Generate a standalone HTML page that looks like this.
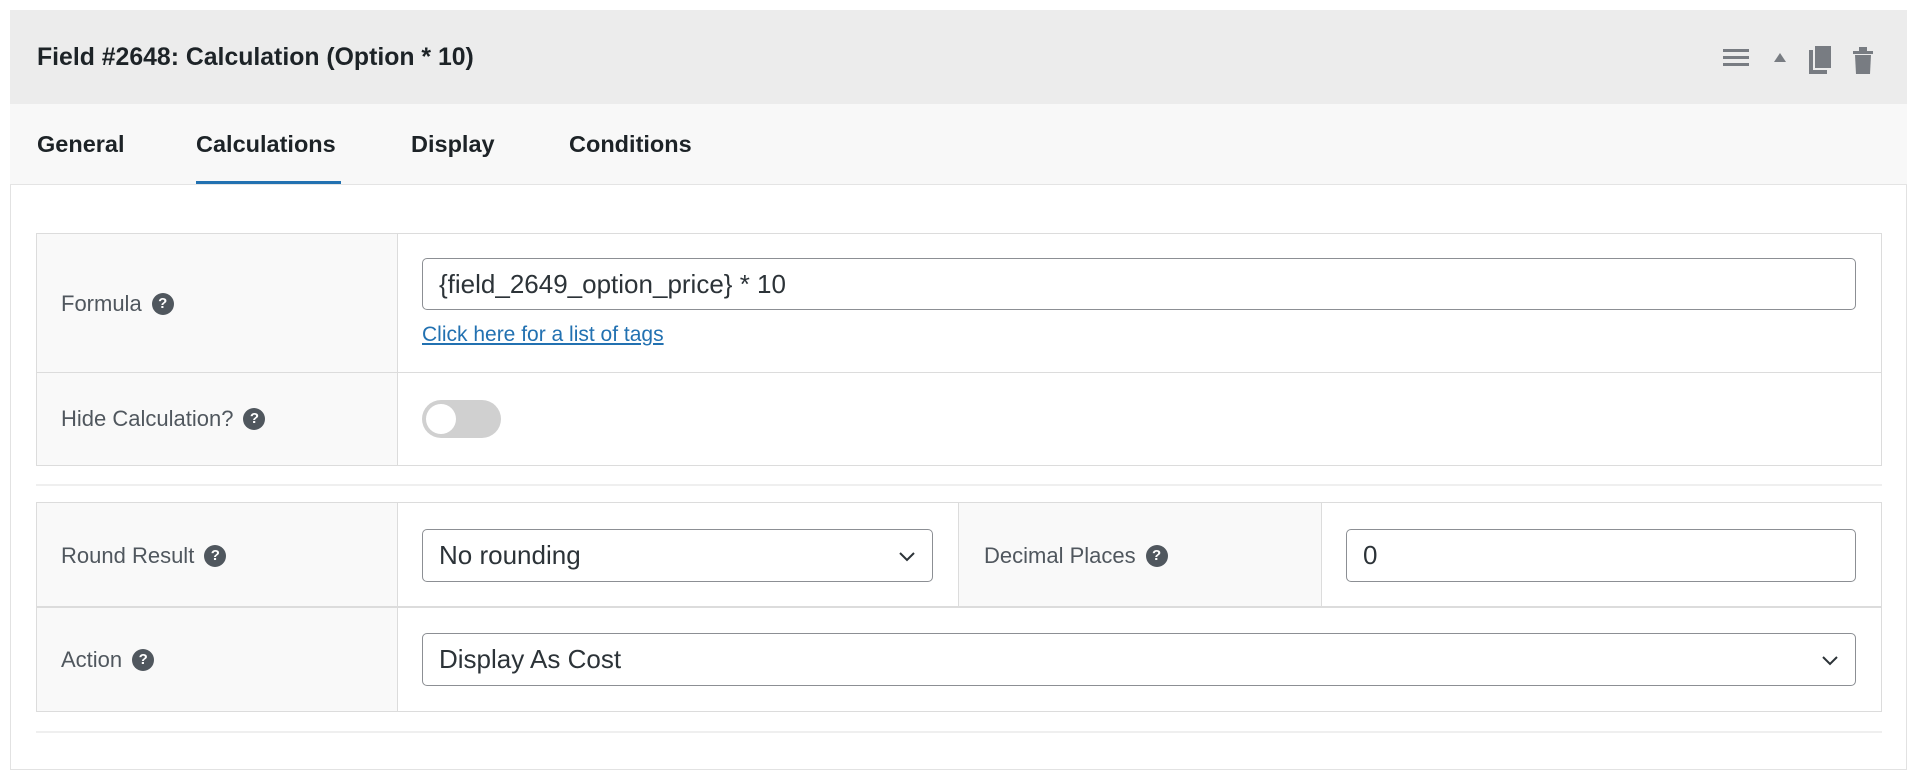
<!DOCTYPE html>
<html><head><meta charset="utf-8"><style>
*{box-sizing:border-box;margin:0;padding:0}
body{width:1920px;height:748px;background:#fff;font-family:"Liberation Sans",sans-serif;position:relative;overflow:hidden;color:#1d2327}
.abs{position:absolute}
.panel{left:10px;top:10px;width:1897px;height:760px;border:1px solid #e2e2e2;background:#fff}
.hdr{left:10px;top:10px;width:1897px;height:94px;background:#ececec}
.tabs{left:10px;top:104px;width:1897px;height:81px;background:#f8f8f8;border-bottom:1px solid #e4e4e4}
.t{position:absolute;top:130px;font-size:23.5px;line-height:28px;font-weight:bold;color:#1d2327}
.cell{position:absolute;background:#f9f9f9;border:1px solid #dcdcdc}
.lbl{position:absolute;font-size:22px;line-height:24px;color:#50575e;display:flex;align-items:center;gap:10px}
.q{width:22px;height:22px;border-radius:50%;background:#50575e;color:#fff;font-size:15px;font-weight:bold;display:inline-flex;align-items:center;justify-content:center}
.inp{position:absolute;background:#fff;border:1px solid #8c8f94;border-radius:5px;font-size:26px;color:#2c3338;padding-left:16px;display:flex;align-items:center}
.chev{position:absolute;right:16px;top:50%;margin-top:-9px}
.line{position:absolute;height:2px;background:#efefef}
</style></head><body>
<div class="abs panel"></div>
<div class="abs hdr"></div>
<div class="abs" style="left:37px;top:44px;font-size:24.8px;line-height:28px;font-weight:bold">Field #2648: Calculation (Option * 10)</div>
<svg class="abs" style="left:1718px;top:40px" width="190" height="36" viewBox="0 0 190 36">
<g fill="#787c82"><rect x="5" y="9" width="26" height="3"/><rect x="5" y="16" width="26" height="3"/><rect x="5" y="23" width="26" height="3"/>
<polygon points="56,22 68,22 62,13"/>
<rect x="97" y="6" width="16" height="22"/><path d="M91 10h4v20h14v4H91z"/>
<rect x="135" y="11" width="20" height="3"/><rect x="141" y="7" width="8" height="4"/><path d="M137 15h16l-1 19h-14z"/></g></svg>
<div class="abs tabs"></div>
<div class="t" style="left:37px">General</div>
<div class="t" style="left:196px">Calculations</div>
<div class="t" style="left:411px">Display</div>
<div class="t" style="left:569px">Conditions</div>
<div class="abs" style="left:196px;top:181px;width:145px;height:3px;background:#2271b1"></div>

<div class="cell" style="left:36px;top:233px;width:1846px;height:233px"></div>
<div class="abs" style="left:397px;top:234px;width:1484px;height:231px;background:#fff;border-left:1px solid #dcdcdc"></div>
<div class="abs" style="left:37px;top:372px;width:1844px;height:1px;background:#dcdcdc"></div>
<div class="lbl" style="left:61px;top:292px">Formula <span class="q">?</span></div>
<div class="inp" style="left:422px;top:258px;width:1434px;height:52px">{field_2649_option_price} * 10</div>
<div class="abs" style="left:422px;top:323px;font-size:21px;color:#2271b1;text-decoration:underline">Click here for a list of tags</div>
<div class="lbl" style="left:61px;top:407px">Hide Calculation? <span class="q">?</span></div>
<div class="abs" style="left:422px;top:400px;width:79px;height:38px;border-radius:19px;background:#d0d0d0"><div class="abs" style="left:4px;top:4px;width:30px;height:30px;border-radius:50%;background:#fff"></div></div>

<div class="line" style="left:36px;top:484px;width:1846px"></div>

<div class="cell" style="left:36px;top:502px;width:1846px;height:210px"></div>
<div class="abs" style="left:397px;top:503px;width:562px;height:104px;background:#fff;border-left:1px solid #dcdcdc;border-right:1px solid #dcdcdc"></div>
<div class="abs" style="left:1321px;top:503px;width:560px;height:104px;background:#fff;border-left:1px solid #dcdcdc"></div>
<div class="abs" style="left:37px;top:606px;width:1844px;height:2px;background:#dcdcdc"></div>
<div class="abs" style="left:397px;top:608px;width:1484px;height:103px;background:#fff;border-left:1px solid #dcdcdc"></div>
<div class="lbl" style="left:61px;top:544px">Round Result <span class="q">?</span></div>
<div class="inp" style="left:422px;top:529px;width:511px;height:53px">No rounding<svg class="chev" width="18" height="18" viewBox="0 0 18 18"><path d="M2 6l7 7 7-7" fill="none" stroke="#2c3338" stroke-width="2"/></svg></div>
<div class="lbl" style="left:984px;top:544px">Decimal Places <span class="q">?</span></div>
<div class="inp" style="left:1346px;top:529px;width:510px;height:53px">0</div>
<div class="lbl" style="left:61px;top:648px">Action <span class="q">?</span></div>
<div class="inp" style="left:422px;top:633px;width:1434px;height:53px">Display As Cost<svg class="chev" width="18" height="18" viewBox="0 0 18 18"><path d="M2 6l7 7 7-7" fill="none" stroke="#2c3338" stroke-width="2"/></svg></div>
<div class="line" style="left:36px;top:731px;width:1846px"></div>
</body></html>
